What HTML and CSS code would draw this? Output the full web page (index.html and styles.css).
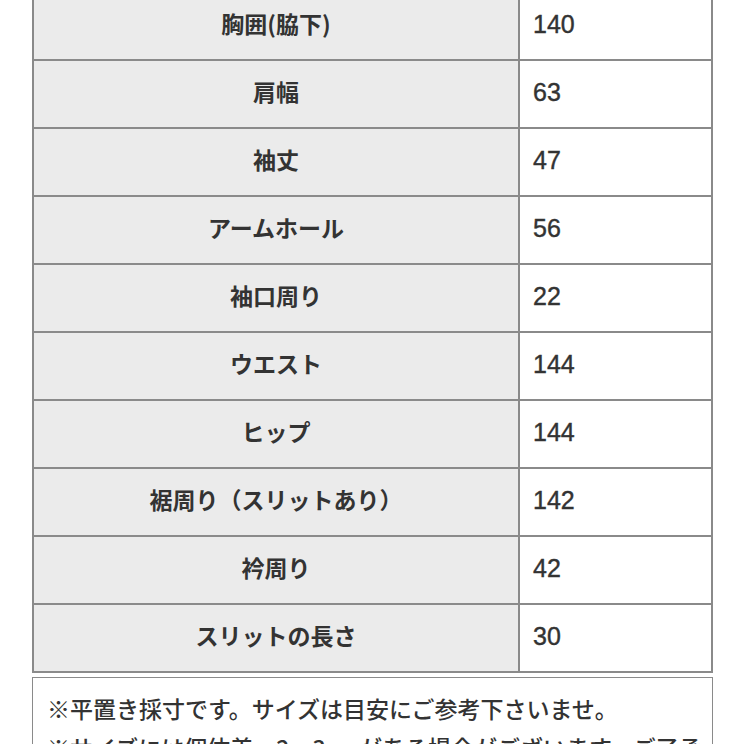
FILE: index.html
```html
<!DOCTYPE html>
<html lang="ja">
<head>
<meta charset="utf-8">
<link rel="stylesheet" href="styles.css">
</head>
<body>
<div class="page">
  <table class="size-table">
    <tbody>
      <tr><th>胸囲(脇下)</th><td>140</td></tr>
      <tr><th>肩幅</th><td>63</td></tr>
      <tr><th>袖丈</th><td>47</td></tr>
      <tr><th>アームホール</th><td>56</td></tr>
      <tr><th>袖口周り</th><td>22</td></tr>
      <tr><th>ウエスト</th><td>144</td></tr>
      <tr><th>ヒップ</th><td>144</td></tr>
      <tr><th>裾周り（スリットあり）</th><td>142</td></tr>
      <tr><th>衿周り</th><td>42</td></tr>
      <tr><th>スリットの長さ</th><td>30</td></tr>
    </tbody>
  </table>
  <div class="note">
    <p>※平置き採寸です。サイズは目安にご参考下さいませ。</p>
    <p>※サイズには個体差、2～3cmがある場合がございます。ご了承の上お買い求めください。</p>
  </div>
</div>
</body>
</html>
```

FILE: styles.css
```css
html, body {
  margin: 0;
  padding: 0;
  background: #ffffff;
  overflow: hidden;
}

.page {
  margin-top: -9px;
  padding-left: 32px;
  width: 681px;
}

.size-table {
  width: 681px;
  border-collapse: separate;
  border-spacing: 0;
  border: 1px solid #8a8a8a;
  table-layout: fixed;
}

.size-table th,
.size-table td {
  padding: 0;
  border: 1px solid #8a8a8a;
  vertical-align: middle;
  color: #333333;
}

.size-table th {
  width: 484px;
  height: 60px;
  padding-bottom: 6px;
  background: #ebebeb;
  text-align: center;
  font-family: "Noto Sans CJK JP", sans-serif;
  font-weight: 700;
  font-size: 23px;
  line-height: 32px;
}

.size-table td {
  height: 62px;
  padding-bottom: 4px;
  background: #ffffff;
  text-align: left;
  padding-left: 13px;
  font-family: "Liberation Sans", "Noto Sans CJK JP", sans-serif;
  font-weight: 400;
  font-size: 25px;
  line-height: 32px;
  -webkit-text-stroke: 0.4px #333333;
}

.note {
  margin-top: 4px;
  border: 1px solid #8a8a8a;
  padding: 11px 10px 10px 14px;
  font-family: "Noto Sans CJK JP", sans-serif;
  font-weight: 500;
  font-size: 23px;
  line-height: 39px;
  color: #333333;
}

.note p {
  margin: 0;
}
```
